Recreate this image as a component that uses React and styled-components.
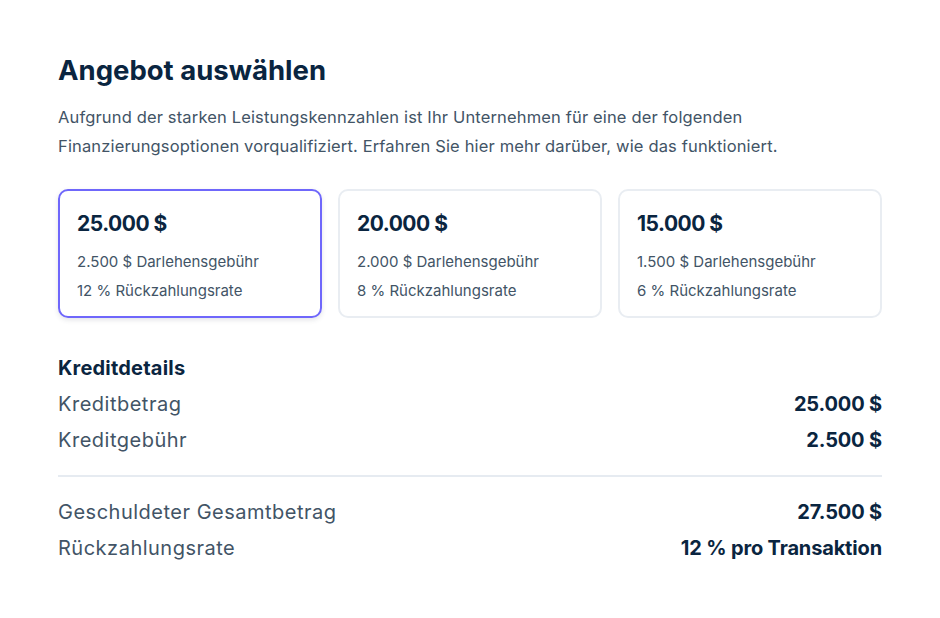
import React, { useState } from "react";
import styled, { createGlobalStyle } from "styled-components";

const Global = createGlobalStyle`
  html, body { margin: 0; padding: 0; background: #ffffff; }
  body { font-family: Inter, "Noto Sans", sans-serif; color: #0a2540; -webkit-font-smoothing: antialiased; }
`;

const Page = styled.main`
  width: 824px;
  padding: 52px 58px 40px;
  display: flex;
  flex-direction: column;
`;

const Title = styled.h1`
  margin: 0;
  font-size: 27.5px;
  line-height: 36px;
  font-weight: 700;
  letter-spacing: 0;
  color: #0a2540;
`;

const Intro = styled.p`
  margin: 15px 0 0;
  font-size: 16.5px;
  line-height: 29px;
  color: #425466;
  letter-spacing: 0.15px;
`;

const Cards = styled.div`
  display: grid;
  grid-template-columns: repeat(3, 1fr);
  gap: 16px;
  margin-top: 28px;
`;

const Card = styled.button`
  all: unset;
  box-sizing: border-box;
  height: 129px;
  padding: 20px 17px;
  border-radius: 10px;
  cursor: pointer;
  display: flex;
  flex-direction: column;
  border: ${(p) => (p.$active ? "2px solid #6f67fb" : "2px solid #e9edf2")};
  box-shadow: ${(p) => (p.$active ? "0 2px 5px rgba(60, 66, 87, 0.14)" : "none")};
`;

const Amount = styled.div`
  font-size: 21px;
  line-height: 26px;
  font-weight: 700;
  letter-spacing: -0.5px;
  color: #0a2540;
`;

const Meta = styled.div`
  margin-top: 10px;
  display: flex;
  flex-direction: column;
`;

const CardLine = styled.div`
  font-size: 15px;
  line-height: 29px;
  color: #425466;
  letter-spacing: 0;
`;

const Details = styled.section`
  margin-top: 37px;
  display: flex;
  flex-direction: column;
`;

const DetailsTitle = styled.h2`
  margin: 0 0 6px;
  font-size: 20px;
  line-height: 26px;
  font-weight: 700;
  letter-spacing: 0.2px;
  color: #0a2540;
`;

const Row = styled.div`
  display: flex;
  justify-content: space-between;
  align-items: baseline;
  height: 35.5px;
  line-height: 35.5px;
`;

const Label = styled.span`
  font-size: 20px;
  color: #425466;
  letter-spacing: 0.5px;
`;

const Value = styled.span`
  font-size: 20px;
  font-weight: 700;
  color: #0a2540;
  letter-spacing: -0.15px;
`;

const Divider = styled.hr`
  border: 0;
  height: 2px;
  background: #e6ebf1;
  margin: 17px 0 18px;
`;

const offers = [
  { amount: 25000, fee: 2500, rate: 12 },
  { amount: 20000, fee: 2000, rate: 8 },
  { amount: 15000, fee: 1500, rate: 6 },
];

const fmt = (n) => n.toLocaleString("de-DE") + " $";

export default function App() {
  const [sel, setSel] = useState(0);
  const o = offers[sel];
  return (
    <>
      <Global />
      <Page>
        <Title>Angebot auswählen</Title>
        <Intro>
          Aufgrund der starken Leistungskennzahlen ist Ihr Unternehmen für eine der folgenden
          <br />
          Finanzierungsoptionen vorqualifiziert. Erfahren Sie hier mehr darüber, wie das funktioniert.
        </Intro>
        <Cards>
          {offers.map((x, i) => (
            <Card key={i} $active={i === sel} onClick={() => setSel(i)}>
              <Amount>{fmt(x.amount)}</Amount>
              <Meta>
                <CardLine>{fmt(x.fee)} Darlehensgebühr</CardLine>
                <CardLine>{x.rate} % Rückzahlungsrate</CardLine>
              </Meta>
            </Card>
          ))}
        </Cards>
        <Details>
          <DetailsTitle>Kreditdetails</DetailsTitle>
          <Row>
            <Label>Kreditbetrag</Label>
            <Value>{fmt(o.amount)}</Value>
          </Row>
          <Row>
            <Label>Kreditgebühr</Label>
            <Value>{fmt(o.fee)}</Value>
          </Row>
          <Divider />
          <Row>
            <Label>Geschuldeter Gesamtbetrag</Label>
            <Value>{fmt(o.amount + o.fee)}</Value>
          </Row>
          <Row>
            <Label>Rückzahlungsrate</Label>
            <Value>{o.rate} % pro Transaktion</Value>
          </Row>
        </Details>
      </Page>
    </>
  );
}
